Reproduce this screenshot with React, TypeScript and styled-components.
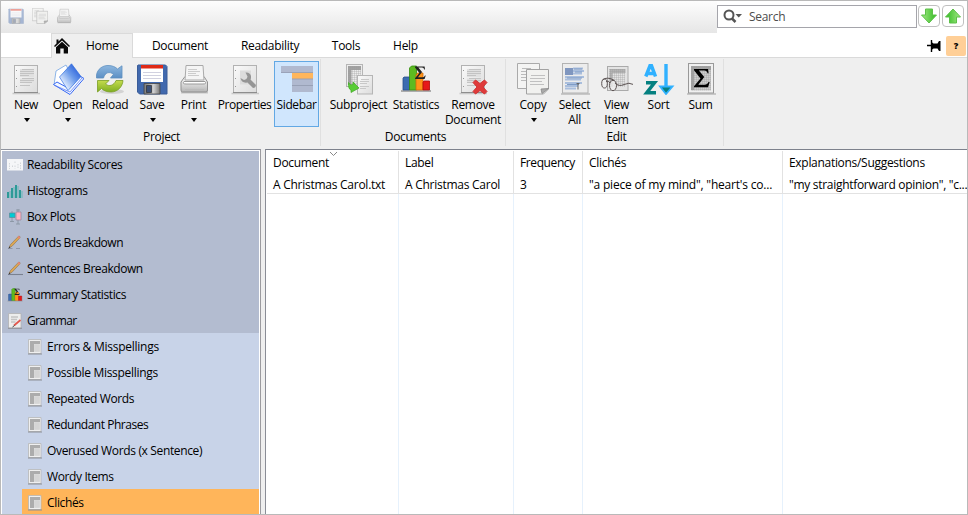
import React from "react";
import styled, { createGlobalStyle, css } from "styled-components";

const Global = createGlobalStyle`
  * { box-sizing: border-box; }
  body { margin: 0; background: #fff; overflow: hidden; }
`;

const Window = styled.div`
  width: 968px;
  height: 515px;
  border: 1px solid #b9b9b9;
  background: #efefef;
  color: #000;
  font: 12px/15px "Open Sans", "Noto Sans", sans-serif;
  display: flex;
  flex-direction: column;
  overflow: hidden;
  white-space: nowrap;
`;

const Label = styled.span<{ $ls?: number }>`
  letter-spacing: ${(p) => p.$ls ?? -0.3}px;
`;

/* ---------- title bar ---------- */
const TitleBar = styled.div`
  height: 32px;
  flex: none;
  display: flex;
`;
const QuickAccess = styled.div`
  width: 716px;
  display: flex;
  align-items: flex-start;
  gap: 8px;
  padding: 7px 0 0 7px;
  background: linear-gradient(#fdfdfd, #e6e6e6);
`;
const SearchArea = styled.div`
  flex: 1;
  background: #fff;
  display: flex;
  align-items: flex-start;
  padding: 4px 0 0 0;
`;
const SearchBox = styled.div`
  width: 200px;
  height: 23px;
  border: 1px solid #a5a5ab;
  display: flex;
  align-items: center;
  color: #4d4d4d;
  padding-left: 5px;
  gap: 7px;
`;
const ArrowButton = styled.div`
  width: 22px;
  height: 22px;
  margin: 0 1px 0 1px;
  border: 1px solid #c0c0c0;
  border-radius: 4px;
  display: flex;
  align-items: center;
  justify-content: center;
`;

/* ---------- tabs ---------- */
const TabRow = styled.div`
  height: 25px;
  flex: none;
  display: flex;
  background: #fff;
  box-shadow: inset 0 -1px #dadada;
  padding-left: 50px;
`;
const Tab = styled.div<{ $w: number; $active?: boolean }>`
  width: ${(p) => p.$w}px;
  display: flex;
  align-items: center;
  justify-content: center;
  padding-right: 2px;
  ${(p) =>
    p.$active &&
    css`
      background: #efefef;
      border: 1px solid #dadada;
      border-bottom: 0;
      justify-content: flex-start;
      gap: 16px;
      padding: 0 0 1px 2px;
    `}
`;
const TabTools = styled.div`
  margin-left: auto;
  display: flex;
  align-items: center;
  gap: 5px;
  padding-right: 1px;
`;
const Help = styled.div`
  width: 20px;
  height: 20px;
  border-radius: 2px;
  background: #ffcf97;
  display: flex;
  align-items: center;
  justify-content: center;
  font-weight: 800;
  font-size: 9px;
`;

/* ---------- ribbon ---------- */
const Ribbon = styled.div`
  height: 91px;
  flex: none;
  display: flex;
`;
const Group = styled.div<{ $w: number; $pad: number }>`
  width: ${(p) => p.$w}px;
  height: 87px;
  margin-top: 1px;
  padding-left: ${(p) => p.$pad}px;
  border-right: 1px solid #e0e0e0;
  display: flex;
  flex-direction: column;
`;
const Buttons = styled.div`
  display: flex;
  height: 70px;
  padding-top: 2px;
`;
const GroupName = styled.div<{ $shift: number }>`
  text-align: center;
  padding-right: ${(p) => p.$shift}px;
`;
const RibbonButton = styled.div<{ $w: number; $on?: boolean }>`
  width: ${(p) => p.$w}px;
  height: 66px;
  flex: none;
  display: flex;
  flex-direction: column;
  align-items: center;
  text-align: center;
  padding-top: 2px;
  ${(p) =>
    p.$on &&
    css`
      background: #d0e6fd;
      box-shadow: inset 0 0 0 1px #62a8e4;
    `}
  svg { flex: none; }
`;
const ButtonText = styled(Label)`
  margin-top: 2px;
  white-space: pre;
`;
const Caret = styled.i`
  margin: 6px 0 0 1px;
  border: 3.5px solid transparent;
  border-top: 4px solid #000;
  border-bottom: 0;
`;

/* ---------- body ---------- */
const Body = styled.div`
  flex: 1;
  min-height: 0;
  display: flex;
  gap: 4px;
`;
const Sidebar = styled.div`
  width: 260px;
  border-top: 1px solid #8f939e;
  border-right: 1px solid #9b9b9f;
  background: #fff;
  padding: 1px 1px 0 1px;
`;
const Section = styled.div`
  height: 26px;
  background: #b3bcd0;
  display: flex;
  align-items: center;
  gap: 4px;
  padding: 1px 0 0 5px;
`;
const SubList = styled.div`
  background: #c8d3e8;
  padding-left: 20px;
`;
const SubItem = styled.div<{ $on?: boolean }>`
  height: 26px;
  display: flex;
  align-items: center;
  gap: 4px;
  padding: 1px 0 0 5px;
  background: ${(p) => (p.$on ? "#ffb55a" : "transparent")};
`;
const Table = styled.div`
  flex: 1;
  min-width: 0;
  background: #fff;
  border-top: 1px solid #7d818c;
  border-left: 1px solid #8a8d96;
  padding: 1px 0 0 1px;
  display: grid;
  grid-template-columns: 132px 115px 69px 200px 1fr;
`;
const Column = styled.div`
  position: relative;
  min-width: 0;
  display: flex;
  flex-direction: column;
  &:not(:last-child) { box-shadow: inset -1px 0 #e6f1fc; }
`;
const Cells = styled.div`
  height: 43px;
  flex: none;
  border-bottom: 1px solid #e2e2e2;
  ${Column}:not(:last-child) & { border-right: 1px solid #e2e2e2; }
`;
const Cell = styled.div`
  height: 22px;
  line-height: 22px;
  padding-left: 6px;
  overflow: hidden;
  padding-top: 1px;
`;
const SortMark = styled.svg`
  position: absolute;
  top: 0;
  left: 62px;
`;

/* ---------- icons ---------- */
type P = { size?: number; faded?: number };
const Svg = ({ size = 32, faded, children }: P & { children: React.ReactNode }) => (
  <svg width={size} height={size} viewBox="0 0 32 32" opacity={faded ?? 1}>
    {children}
  </svg>
);
const HiddenSvg = styled.svg`
  display: block;
  width: 0;
  height: 0;
`;
const Defs = () => (
  <HiddenSvg>
    <defs>
      <linearGradient id="page" x1="0" y1="0" x2="1" y2="1">
        <stop offset="0" stopColor="#fafafa" /><stop offset="1" stopColor="#dcdcdc" />
      </linearGradient>
      <linearGradient id="blue" x1="0" y1="0" x2="0" y2="1">
        <stop offset="0" stopColor="#8db7df" /><stop offset="1" stopColor="#5c8fc4" />
      </linearGradient>
      <linearGradient id="green" x1="0" y1="0" x2="0" y2="1">
        <stop offset="0" stopColor="#c5dc4e" /><stop offset="1" stopColor="#7fae22" />
      </linearGradient>
      <linearGradient id="book" x1="0.2" y1="0.8" x2="0.9" y2="0.1">
        <stop offset="0" stopColor="#e5efff" /><stop offset="0.5" stopColor="#6c9bea" /><stop offset="1" stopColor="#2257d8" />
      </linearGradient>
      <linearGradient id="metal" x1="0" y1="0" x2="0" y2="1">
        <stop offset="0" stopColor="#fff" /><stop offset="1" stopColor="#b5b5b5" />
      </linearGradient>
      <linearGradient id="shutter">
        <stop offset="0" stopColor="#777" /><stop offset="0.6" stopColor="#d0d0d0" /><stop offset="1" stopColor="#777" />
      </linearGradient>
      <linearGradient id="arrow">
        <stop offset="0" stopColor="#a5e986" /><stop offset="1" stopColor="#2fba20" />
      </linearGradient>
      <pattern id="mesh" width="2" height="2" patternUnits="userSpaceOnUse">
        <path d="M0 0H2V2" fill="none" stroke="#999" strokeWidth=".6" />
      </pattern>
    </defs>
  </HiddenSvg>
);
const Page = () => (
  <>
    <path d="M2.500 30.500H30" stroke="#c9c9c9" strokeWidth="1.600" />
    <rect x="4.500" y="2.500" width="23" height="27" fill="url(#page)" stroke="#b2b2b2" />
    <path d="M4 29.500H28" stroke="#8d8d8d" />
    <path d="M6.500 7v1M6.500 15v1M6.500 23v1" stroke="#999" />
  </>
);
const PageLines = () => (
  <>
    <path d="M10 6h14v8H10ZM10 15.500h14v4H10Z" fill="#e0e0e0" />
    <path d="M12 6.500h12M10 8.500h14M10 10.500h14M10 12.500h9M12 15.500h12M10 17.500h14M10 19.500h12M10 22.500h10" stroke="#c3c3c3" />
  </>
);
const NewIcon = () => <Svg><Page /><PageLines /></Svg>;
const OpenIcon = () => (
  <Svg>
    <path d="M4 8 14 2 23 19 12 26 2 22Z" fill="#fff" stroke="#8db5e8" />
    <path d="M1.500 21.500 18 31.500 32 15.500 26 12 16 25 5 19Z" fill="#f2f7ff" stroke="#3567f3" />
    <path d="M3 22.500 18 29 30 15" fill="none" stroke="#5e7df5" strokeWidth=".8" />
    <path d="M19.500.8 29 13.500 16 27.500 7.500 14Z" fill="url(#book)" stroke="#3470e0" strokeWidth=".7" />
  </Svg>
);
const ReloadIcon = () => (
  <Svg>
    <ellipse cx="18" cy="28.500" rx="12" ry="2.500" fill="#bbb" opacity=".55" />
    <path d="M2.500 15V12C3.500 6 8.500 2.500 14 2.500C18.500 2.500 21.500 4 23.500 6L28 2.800V15H16.500L19.500 11.300C15.500 8 11 9.500 9.500 15Z" fill="url(#blue)" stroke="#5d8fc0" strokeWidth=".8" />
    <path d="M29 17.500C28.500 24 23.500 29 17 29C12.500 29 9.500 27.500 7.500 25.500L3.500 29V17.500H15L11.500 21C15 24 20 22.500 22 17.500Z" fill="url(#green)" stroke="#7a9e25" strokeWidth=".8" />
  </Svg>
);
const SaveIcon = ({ size, faded }: P) => (
  <Svg size={size} faded={faded}>
    <path d="M2 2h27.500l1.500 1.500V31H3.500L1.500 29V2.500Z" fill="#4169ae" stroke="#3a5c98" />
    <path d="M5 2h22v17H5Z" fill="#fff" /><path d="M5 2h22v3.500H5Z" fill="#df2a17" />
    <path d="M7 9.500h18M7 12.500h18M7 15.500h18" stroke="#ccd" strokeWidth=".9" />
    <path d="M8 20.500h16v10.500H8Z" fill="url(#shutter)" stroke="#444" strokeWidth=".8" />
    <path d="M10.500 22.500h5v7h-5Z" fill="#3a4f77" stroke="#222" strokeWidth=".6" />
  </Svg>
);
const PrintIcon = ({ size, faded }: P) => (
  <Svg size={size} faded={faded}>
    <path d="M3 29.500h27" stroke="#aaa" strokeWidth="2" opacity=".6" />
    <path d="M7 13.500H26L29.500 19V27Q29.500 29 28 29H4.500Q3 29 3 27V19Z" fill="url(#metal)" stroke="#919191" />
    <path d="M8 2.500H25L26 17H7Z" fill="#f5f5f5" stroke="#aaa" />
    <path d="M10 6.500h9M10 8.500h12M10 10.500h8M10 12.500h11" stroke="#ccc" />
    <path d="M6 18.500H27Q29 21 25 21H8Q4 21 6 18.500Z" fill="#fff" stroke="#999" />
    <path d="M7 26.500h19" stroke="#bbb" />
  </Svg>
);
const PropertiesIcon = () => (
  <Svg>
    <Page />
    <path d="M11 7.500h11v14H11Z" fill="#dcdcdc" />
    <path d="M16.500 9.500Q21 9 22 13Q22.300 15 21.500 16.500L27 22Q26.800 25 24 25L18.500 19.500Q12.500 20.500 11.500 15L15 17Q18 16.500 18.500 13.500Z" fill="#959595" />
  </Svg>
);
const SidebarIcon = () => (
  <Svg>
    <path d="M0 3h32v6.500H0ZM11 16h21v6.500H11ZM11 22.500h21V29H11Z" fill="#b0b9cf" />
    <path d="M11 9.500h21V16H11Z" fill="#ffb65c" />
    <path d="M0 9.500h32M11 16h21M11 22.500h21" stroke="#959eb3" strokeWidth=".9" />
  </Svg>
);
const SubprojectIcon = () => (
  <Svg>
    <rect x="3.500" y="1.500" width="16" height="22" fill="#ececec" stroke="#b5b5b5" />
    <path d="M5 3h13v4H5ZM5 3h3.500v19H5Z" fill="#a2a2a2" /><path d="M5 3h13v19H5Z" fill="url(#mesh)" />
    <rect x="14.500" y="12.500" width="15" height="18.500" fill="url(#page)" stroke="#b5b5b5" />
    <path d="M18 16.500h8M17 18.500h9M17 20.500h7M17 23.500h9M17 25.500h6" stroke="#c8c8c8" />
    <path d="M5.500 19.500Q7 23 10 21.500V19L16 25 8 29.500V27Q5 26 5.500 19.500Z" fill="#58cc36" stroke="#3fa823" strokeWidth=".7" />
  </Svg>
);
const Sigma = ({ x, y, s, c = "#222" }: { x: number; y: number; s: number; c?: string }) => (
  <path transform={`translate(${x} ${y}) scale(${s})`} d="M0 0H13L13.500 4H12.500Q12 1.500 9.500 1.500H4.500L9.500 7.500 4 14.500H10Q12.500 14.500 13.500 12H14.500L13 17H0V16L6 8.800 0 1.200Z" fill={c} />
);
const StatisticsIcon = ({ size }: P) => (
  <Svg size={size}>
    <path d="M1 28h30" stroke="#969696" strokeWidth="1.500" />
    <path d="M3 15l1-1h5.500v13H3Z" fill="#3b6cb0" stroke="#284e8c" strokeWidth=".8" />
    <path d="M9.500 5l2-2h5v24h-7Z" fill="#5dba20" stroke="#328e0e" strokeWidth=".8" />
    <path d="M16 12l1.500-2h5.500v17h-7Z" fill="#ff941a" stroke="#cf6b07" strokeWidth=".8" />
    <path d="M23 19l1-1h5.500v9H23Z" fill="#e61919" stroke="#af0909" strokeWidth=".8" />
    <Sigma x={15} y={3.5} s={0.74} />
  </Svg>
);
const RemoveIcon = () => (
  <Svg>
    <Page /><PageLines />
    <path d="M16 19.500l2.500-2.500 4.500 3.500 4.500-3.500L30 19.500l-4 4.500 4 4.500-2.500 2.500-4.500-3.500-4.500 3.500L16 28.500l4-4.500Z" fill="#df3b3b" stroke="#d03434" strokeLinejoin="round" />
  </Svg>
);
const CopyIcon = ({ size, faded }: P) => (
  <Svg size={size} faded={faded}>
    <path d="M.5.500h22v25H.5Z" fill="#f4f4f3" stroke="#aaa" />
    <path d="M5 5.500h9M4 8.500h7M4 11.500h5M4 14.500h5M4 17.500h5" stroke="#bbb" />
    <path d="M9.500 6.500h22V26l-5 5h-17Z" fill="#f1f1ef" stroke="#a2a2a2" />
    <path d="M14 12.500h14M13 15.500h15M13 18.500h12M13 21.500h14" stroke="#c0c0c0" />
    <path d="M31.500 25.500l-7.500 0.500 1 4.500Z" fill="#aaa" stroke="#888" strokeWidth=".8" />
  </Svg>
);
const SelectIcon = () => (
  <Svg>
    <path d="M2 31h29" stroke="#bbb" strokeWidth="1.500" />
    <rect x="3.500" y=".5" width="25.500" height="29.500" fill="#ececec" stroke="#b2b2b2" />
    <path d="M6 5h8v7H6Z" fill="#7f96bf" />
    <path d="M14 5.500h10M14 8h11M14 10.500h9M6 14h19M6 16.500h16M6 20h17M6 23h13M6 25.500h11" stroke="#a9bedd" strokeWidth="2" />
    <path d="M15 6h8M16 9h7M8 15h15M8 21.500h12" stroke="#7f9cc6" />
    <path d="M17.500 20.500h3M19 20.500v6" stroke="#666" />
  </Svg>
);
const GlassesIcon = () => (
  <Svg>
    <rect x="6.500" y="3.500" width="20.500" height="24" fill="#e3e3e3" stroke="#aaa" />
    <path d="M8.500 6h16v4h-16ZM8.500 6h3v18h-3Z" fill="#b4b4b4" /><path d="M8 6h16v18H8Z" fill="url(#mesh)" />
    <g fill="#eee" fillOpacity=".8" stroke="#5c5353">
      <ellipse cx="3.500" cy="20.500" rx="2.800" ry="4.500" /><ellipse cx="12" cy="22.500" rx="3.500" ry="5.200" />
      <path d="M5 18.500Q7.500 17 9 20M14 20Q18 24 23 21.500T32.500 21.500M1.500 17Q6 13 13.500 17.500" fill="none" />
    </g>
  </Svg>
);
const SortIcon = () => (
  <Svg>
    <path d="M2.800 13.500 7 2.800H8.500L12.500 13.500M4.500 10.500h6" fill="none" stroke="#30b1ff" strokeWidth="3.500" />
    <path d="M3 19.700h8.500L3.700 29.800H13" fill="none" stroke="#058080" strokeWidth="3.500" />
    <path d="M23 1v26" stroke="#30b1ff" strokeWidth="3.400" />
    <path d="M17 23.500h12.500L23 31Z" fill="#078080" stroke="#30b1ff" strokeWidth="1.800" />
  </Svg>
);
const SumIcon = () => (
  <Svg>
    <path d="M2 31h29" stroke="#bbb" strokeWidth="1.500" />
    <rect x="3.500" y=".5" width="25" height="29.500" fill="#f0f0f0" stroke="#999" />
    <path d="M6 3h20v24.500H6Z" fill="#cfcfcf" /><path d="M6 3h20v4H6ZM6 3h3v24H6Z" fill="#a3a3a3" />
    <path d="M6 3h20v24.500H6Z" fill="url(#mesh)" />
    <Sigma x={9} y={6} s={1.08} c="#000" />
  </Svg>
);
const GrammarIcon = () => (
  <Svg size={16}>
    <path d="M3 1h25v29H3Z" fill="#ededed" stroke="#b0b0b0" strokeWidth="1.500" />
    <path d="M2 30.500h28" stroke="#8c8f95" strokeWidth="2" />
    <path d="M8 8h14M8 13h12M8 18h9" stroke="#c4c4c4" strokeWidth="3" />
    <path d="M14 25 27 14" stroke="#e2564c" strokeWidth="3.500" />
    <path d="M11 28l4-3" stroke="#444" strokeWidth="2" />
  </Svg>
);
const ScoresIcon = () => (
  <Svg size={16}>
    <path d="M0 4h32v23H0Z" fill="#f5f6f8" /><path d="M5 12v12M11 17v5M16 9v4M16 17v6M22 14v8M27 11v13" stroke="#d3d6da" strokeWidth="2" strokeDasharray="3 2" />
  </Svg>
);
const HistogramIcon = () => (
  <Svg size={16}>
    <path d="M2 18v12M10 10v20M18 4v26M26 14v16" stroke="#2d9a98" strokeWidth="4" />
    <path d="M6 16v14M14 8v22M22 6v24M30 16v14" stroke="#80b9c0" strokeWidth="3" />
  </Svg>
);
const BoxPlotIcon = () => (
  <Svg size={16}>
    <path d="M10 4v22M6 25h8M22 0v30M18 30h8M18 2h8" stroke="#8592a0" strokeWidth="1.600" />
    <path d="M5 8h11v9H5Z" fill="#00cbd3" stroke="#5c8d9b" strokeWidth="1.500" />
    <path d="M18 6h10v16H18Z" fill="#ffb2c0" stroke="#98879a" strokeWidth="1.500" />
  </Svg>
);
const PencilIcon = ({ full }: { full?: boolean }) => (
  <Svg size={16}>
    <path d={full ? "M2 27h30" : "M2 27h9M18 27h8"} stroke={full ? "#7a8190" : "#8f97a8"} strokeWidth="2.200" />
    <path d="M4 25 7 19 23 2.500Q27 1.500 26 5.500L10 22.500Z" fill="#dea751" stroke="#8d7353" strokeWidth="1.200" />
    <path d="M21 4.500l3.500 3.500 2-3-3-3.500Z" fill="#e78676" /><path d="M3 27l2-4 2 2Z" fill="#333" />
  </Svg>
);
const ListIcon = () => (
  <Svg size={16}>
    <path d="M3 1h25v28H3Z" fill="#efefef" stroke="#b4b4b4" strokeWidth="1.500" />
    <path d="M6 4h20v6H6ZM6 4h8v22H6Z" fill="#acacac" /><path d="M14 10h12v16H14Z" fill="#dcdcdc" />
    <path d="M18 10v16M22 10v16M14 14h12M14 18h12M14 22h12" stroke="#cdcdcd" />
    <path d="M2 30h28" stroke="#8c8f95" strokeWidth="2" />
  </Svg>
);
const HomeIcon = () => (
  <svg width="16" height="16" viewBox="0 0 16 16">
    <path d="M8 0 16 8 15 9 8 2.600 1 9 0 8 2.500 5.400V1.500h2V3.500ZM8 3.700 14 9.200V15.500H9.700V10.500H6.300V15.500H2V9.200Z" fill="#080808" />
  </svg>
);
const GreenArrow = ({ up }: { up?: boolean }) => (
  <svg width="18" height="18" viewBox="0 0 18 18">
    <path transform={up ? "rotate(180 9 9)" : undefined} d="M5.500 2H12.500V8H16.500L9 16 1.500 8H5.500Z" fill="url(#arrow)" stroke="#5cc049" />
  </svg>
);
const SearchIcon = () => (
  <svg width="19" height="15" viewBox="0 0 19 15">
    <circle cx="6" cy="6" r="4.500" fill="none" stroke="#555" strokeWidth="2" />
    <path d="M9 9.500l3.500 3.500" stroke="#555" strokeWidth="2.500" /><path d="M12.500 5h6.500L15.700 8.500Z" fill="#555" />
  </svg>
);
const PinIcon = () => (
  <svg width="14" height="12" viewBox="0 0 14 12">
    <path d="M0 5.500h5M4.500 0v12" stroke="#000" strokeWidth="1.400" />
    <path d="M4.500 2 6.500 3.500H10.500L12 1H13.500V11H12L10.500 8.500H6.500L4.500 10Z" fill="#000" />
  </svg>
);

/* ---------- data ---------- */
type Btn = { t: string; w: number; icon: React.ReactNode; ls?: number; caret?: boolean; on?: boolean };
const groups: { name: string; w: number; pad: number; shift: number; items: Btn[] }[] = [
  { name: "Project", w: 320, pad: 4, shift: 2, items: [
    { t: "New", w: 42, icon: <NewIcon />, caret: true },
    { t: "Open", w: 41, icon: <OpenIcon />, caret: true },
    { t: "Reload", w: 44, icon: <ReloadIcon /> },
    { t: "Save", w: 40, icon: <SaveIcon />, caret: true },
    { t: "Print", w: 43, icon: <PrintIcon />, caret: true },
    { t: "Properties", w: 59, icon: <PropertiesIcon />, ls: -0.45 },
    { t: "Sidebar", w: 45, icon: <SidebarIcon />, on: true, ls: -0.4 },
  ] },
  { name: "Documents", w: 185, pad: 6, shift: 1, items: [
    { t: "Subproject", w: 63, icon: <SubprojectIcon /> },
    { t: "Statistics", w: 52, icon: <StatisticsIcon /> },
    { t: "Remove\nDocument", w: 62, icon: <RemoveIcon /> },
  ] },
  { name: "Edit", w: 218, pad: 6, shift: 2, items: [
    { t: "Copy", w: 42, icon: <CopyIcon />, caret: true },
    { t: "Select\nAll", w: 41, icon: <SelectIcon /> },
    { t: "View\nItem", w: 43, icon: <GlassesIcon /> },
    { t: "Sort", w: 41, icon: <SortIcon /> },
    { t: "Sum", w: 43, icon: <SumIcon /> },
  ] },
];
const tabs: [string, number][] = [["Document", 96], ["Readability", 84], ["Tools", 68], ["Help", 51]];
const sections: [string, React.ReactNode, number?][] = [
  ["Readability Scores", <ScoresIcon />, -0.34],
  ["Histograms", <HistogramIcon />, -0.35],
  ["Box Plots", <BoxPlotIcon />, -0.4],
  ["Words Breakdown", <PencilIcon />, -0.46],
  ["Sentences Breakdown", <PencilIcon full />, -0.43],
  ["Summary Statistics", <StatisticsIcon size={16} />, -0.4],
  ["Grammar", <GrammarIcon />, -0.65],
];
const subs: [string, number?][] = [
  ["Errors & Misspellings", -0.26],
  ["Possible Misspellings", -0.3],
  ["Repeated Words", -0.4],
  ["Redundant Phrases", -0.48],
  ["Overused Words (x Sentence)", -0.35],
  ["Wordy Items", -0.38],
  ["Clichés", -0.35],
];
const columns: [string, string, number?, number?][] = [
  ["Document", "A Christmas Carol.txt", -0.33, -0.26],
  ["Label", "A Christmas Carol", -0.3, -0.26],
  ["Frequency", "3", -0.4],
  ["Clichés", "\"a piece of my mind\", \"heart's co...", -0.3, -0.2],
  ["Explanations/Suggestions", "\"my straightforward opinion\", \"c..."],
];

export default function App() {
  return (
    <>
      <Global />
      <Defs />
      <Window>
        <TitleBar>
          <QuickAccess>
            <SaveIcon size={16} faded={0.42} />
            <CopyIcon size={16} faded={0.85} />
            <PrintIcon size={16} faded={0.8} />
          </QuickAccess>
          <SearchArea>
            <SearchBox><SearchIcon /><Label>Search</Label></SearchBox>
            <ArrowButton><GreenArrow /></ArrowButton>
            <ArrowButton><GreenArrow up /></ArrowButton>
          </SearchArea>
        </TitleBar>
        <TabRow>
          <Tab $w={82} $active><HomeIcon /><Label>Home</Label></Tab>
          {tabs.map(([t, w]) => <Tab key={t} $w={w}><Label>{t}</Label></Tab>)}
          <TabTools><PinIcon /><Help>?</Help></TabTools>
        </TabRow>
        <Ribbon>
          {groups.map((g) => (
            <Group key={g.name} $w={g.w} $pad={g.pad}>
              <Buttons>
                {g.items.map((b) => (
                  <RibbonButton key={b.t} $w={b.w} $on={b.on}>
                    {b.icon}
                    <ButtonText $ls={b.ls}>{b.t}</ButtonText>
                    {b.caret && <Caret />}
                  </RibbonButton>
                ))}
              </Buttons>
              <GroupName $shift={g.shift + g.pad - (g.name === "Project" ? 4 : 6)}><Label>{g.name}</Label></GroupName>
            </Group>
          ))}
        </Ribbon>
        <Body>
          <Sidebar>
            {sections.map(([t, icon, ls]) => <Section key={t}>{icon}<Label $ls={ls}>{t}</Label></Section>)}
            <SubList>
              {subs.map(([t, ls]) => <SubItem key={t} $on={t === "Clichés"}><ListIcon /><Label $ls={ls}>{t}</Label></SubItem>)}
            </SubList>
          </Sidebar>
          <Table>
            {columns.map(([h, v, a, b], i) => (
              <Column key={h}>
                {i === 0 && <SortMark width="9" height="6" viewBox="0 0 9 6"><path d="M1 1l3.500 3.500L8 1" fill="none" stroke="#888" /></SortMark>}
                <Cells>
                  <Cell><Label $ls={a}>{h}</Label></Cell>
                  <Cell><Label $ls={b}>{v}</Label></Cell>
                </Cells>
              </Column>
            ))}
          </Table>
        </Body>
      </Window>
    </>
  );
}
